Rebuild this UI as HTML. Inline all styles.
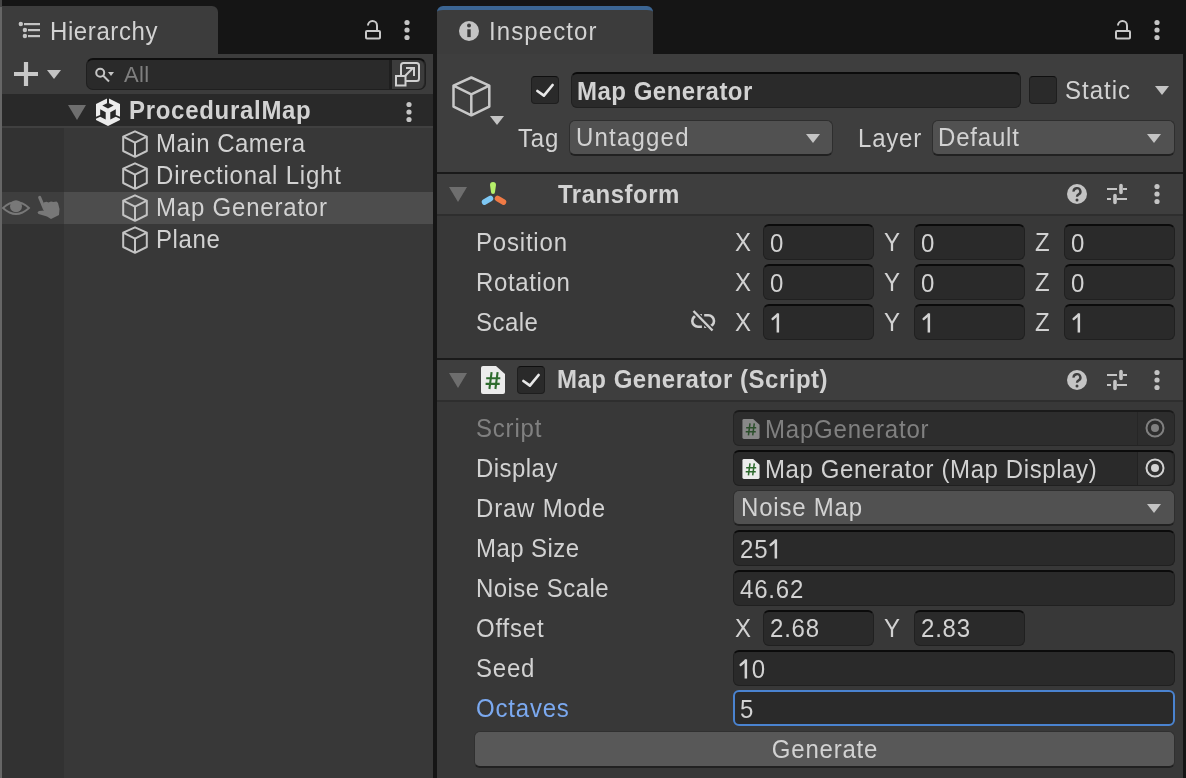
<!DOCTYPE html>
<html><head><meta charset="utf-8">
<style>
*{margin:0;padding:0;box-sizing:border-box}
html,body{width:1186px;height:778px;overflow:hidden;background:#151515;-webkit-font-smoothing:antialiased;font-family:"Liberation Sans",sans-serif;color:#d2d2d2}
.a{position:absolute}
.t{will-change:transform;transform:scaleY(1.05);transform-origin:0 22px;position:absolute;font-size:24px;line-height:28px;white-space:nowrap;letter-spacing:0.8px}
.b{font-weight:bold;letter-spacing:0.5px}
.fld{position:absolute;background:#2a2a2a;border:1px solid #202020;border-top:2px solid #0b0b0b;border-radius:6px;height:36px}
.dd{position:absolute;background:#515151;border:1px solid #2e2e2e;border-bottom:2px solid #212121;border-radius:6px}
.arr{position:absolute;width:0;height:0;border-left:8px solid transparent;border-right:8px solid transparent;border-top:10px solid #c4c4c4}
.fold{position:absolute;width:0;height:0;border-left:9px solid transparent;border-right:9px solid transparent;border-top:15px solid #6e6e6e}
.sep{position:absolute;background:#1a1a1a}
.one{position:relative;color:transparent}
</style></head><body>
<!-- left edge strip -->
<div class="a" style="left:0;top:0;width:2px;height:7px;background:#474747"></div>
<div class="a" style="left:0;top:7px;width:2px;height:771px;background:#666666"></div>

<!-- ============ HIERARCHY ============ -->
<div class="a" style="left:2px;top:6px;width:216px;height:60px;background:#3c3c3c;border-radius:0 6px 0 0"></div>
<div class="a" style="left:2px;top:54px;width:431px;height:40px;background:#3c3c3c"></div>
<div class="a" style="left:2px;top:94px;width:431px;height:684px;background:#383838"></div>
<div class="a" style="left:2px;top:128px;width:62px;height:650px;background:#323232"></div>
<div class="a" style="left:2px;top:94px;width:431px;height:32px;background:#292929"></div>
<div class="a" style="left:2px;top:126px;width:431px;height:2px;background:#404040"></div>
<!-- selected row -->
<div class="a" style="left:64px;top:192px;width:369px;height:32px;background:#4d4d4d"></div>
<div class="a" style="left:2px;top:192px;width:62px;height:32px;background:#3e3e3e"></div>


<svg class="a" style="left:0px;top:192px" width="64" height="32" viewBox="0 0 64 32"><path d="M3 16 Q16 4 29 16 Q16 28 3 16 Z" fill="none" stroke="#787878" stroke-width="1.8"/><circle cx="16" cy="14.3" r="6" fill="#787878"/><path d="M3 16 Q16 4 29 16" fill="none" stroke="#3e3e3e" stroke-width="0" /><path d="M39.7 5.5 L44.5 17" stroke="#787878" stroke-width="3.2" stroke-linecap="round"/><path d="M43.5 10.5 L46.5 9.8 L48.5 10.6 L51 9.5 L53.5 10 L56.5 9.5 L58 11 L59.5 17 L59 23 L51 27 L47 24.5 L38.5 22 L37.5 20.3 L39 19 L44 18.5 Z" fill="#787878"/></svg>
<!-- hierarchy tab content -->
<svg class="a" style="left:16px;top:20px" width="28" height="20" viewBox="0 0 28 20">
<circle cx="4.8" cy="4" r="2.2" fill="#c4c4c4"/><rect x="8" y="3" width="16" height="2.2" fill="#c4c4c4"/>
<circle cx="8.9" cy="10" r="2.2" fill="#c4c4c4"/><rect x="12" y="9" width="12" height="2.2" fill="#c4c4c4"/>
<circle cx="8.9" cy="16" r="2.2" fill="#c4c4c4"/><rect x="12" y="15" width="12" height="2.2" fill="#c4c4c4"/>
</svg>
<div class="t" style="left:50px;top:18px;letter-spacing:0.6px">Hierarchy</div>
<svg class="a" style="left:360px;top:16px" width="26" height="28" viewBox="0 0 26 28"><rect x="6" y="15" width="14" height="7.6" rx="1" fill="none" stroke="#c8c8c8" stroke-width="2"/><path d="M8 9.6 A4.5 4.5 0 0 1 17 9.5 L17 15" fill="none" stroke="#c8c8c8" stroke-width="2"/></svg>
<svg class="a" style="left:401px;top:17px" width="12" height="26" viewBox="0 0 12 26"><circle cx="6" cy="5.5" r="2.6" fill="#c4c4c4"/><circle cx="6" cy="13" r="2.6" fill="#c4c4c4"/><circle cx="6" cy="20.5" r="2.6" fill="#c4c4c4"/></svg>
<!-- toolbar -->
<svg class="a" style="left:14px;top:62px" width="24" height="24" viewBox="0 0 24 24"><path d="M12 0 V24 M0 12 H24" stroke="#c8c8c8" stroke-width="4.2"/></svg>
<div class="arr" style="left:47px;top:70px;border-left-width:7px;border-right-width:7px;border-top-width:9px"></div>
<div class="a" style="left:86px;top:58px;width:340px;height:32px;background:#2a2a2a;border:1px solid #1f1f1f;border-top:2px solid #0f0f0f;border-radius:7px"></div>
<svg class="a" style="left:94px;top:66px" width="22" height="18" viewBox="0 0 22 18"><circle cx="6.2" cy="6.7" r="4" fill="none" stroke="#c4c4c4" stroke-width="2"/><path d="M9 9.5 L15 15.5" stroke="#c4c4c4" stroke-width="2"/><path d="M14 6 L20 6 L17 10 Z" fill="#c4c4c4"/></svg>
<div class="t" style="left:124px;top:60.5px;font-size:22px;color:#7f7f7f;letter-spacing:0.3px;transform:none">All</div>
<div class="a" style="left:388.5px;top:60px;width:3px;height:29px;background:#1f1f1f"></div><div class="a" style="left:391.5px;top:60px;width:32.5px;height:28.5px;background:#3c3c3c;border-radius:0 6px 6px 0"></div><svg class="a" style="left:394px;top:60px" width="30" height="28" viewBox="0 0 30 28"><rect x="7" y="3" width="18" height="18" rx="2.5" fill="none" stroke="#d0d0d0" stroke-width="2"/><rect x="2" y="16" width="9.5" height="9.5" fill="#3c3c3c" stroke="#d0d0d0" stroke-width="2"/><path d="M11 16 L19 8" stroke="#d0d0d0" stroke-width="2"/><path d="M12 8 H20 V16" fill="none" stroke="#d0d0d0" stroke-width="2"/></svg>
<!-- rows -->
<div class="fold" style="left:68px;top:105px"></div>
<svg class="a" style="left:96px;top:98px" width="24" height="28" viewBox="0 0 24 28">
<path d="M12 0 L24 6.1 L24 21.9 L12 28 L0 21.9 L0 6.1 Z" fill="#ececec"/>
<path d="M6.3 7.4 L12 4.8 L17.7 7.4 L12 10.5 Z" fill="#282828"/>
<rect x="11" y="0" width="2" height="5.5" fill="#282828"/>
<path d="M4.2 11.2 L9.7 14.2 L9.7 21.6 L4.2 18.8 L0 20.7 L0 18.8 L4.2 16.9 Z" fill="#282828"/>
<path d="M19.8 11.2 L14.3 14.2 L14.3 21.6 L19.8 18.8 L24 20.7 L24 18.8 L19.8 16.9 Z" fill="#282828"/>
</svg>
<div class="t b" style="left:129px;top:97px;letter-spacing:0.7px">ProceduralMap</div>
<svg class="a" style="left:403px;top:99px" width="12" height="26" viewBox="0 0 12 26"><circle cx="6" cy="5.5" r="2.6" fill="#c4c4c4"/><circle cx="6" cy="13" r="2.6" fill="#c4c4c4"/><circle cx="6" cy="20.5" r="2.6" fill="#c4c4c4"/></svg>
<svg class="a" style="left:122px;top:130px" width="26" height="28" viewBox="0 0 26 28"><path d="M13 1.3 L24.8 6.6 L24.8 21 L13 26.8 L1.2 21 L1.2 6.6 Z M1.2 6.6 L13 12.7 L24.8 6.6 M13 12.7 L13 26.8" fill="none" stroke="#c4c4c4" stroke-width="2" stroke-linejoin="round"/></svg><div class="t" style="left:156px;top:129.5px;letter-spacing:0.5px">Main Camera</div>
<svg class="a" style="left:122px;top:162px" width="26" height="28" viewBox="0 0 26 28"><path d="M13 1.3 L24.8 6.6 L24.8 21 L13 26.8 L1.2 21 L1.2 6.6 Z M1.2 6.6 L13 12.7 L24.8 6.6 M13 12.7 L13 26.8" fill="none" stroke="#c4c4c4" stroke-width="2" stroke-linejoin="round"/></svg><div class="t" style="left:156px;top:161.5px">Directional Light</div>
<svg class="a" style="left:122px;top:194px" width="26" height="28" viewBox="0 0 26 28"><path d="M13 1.3 L24.8 6.6 L24.8 21 L13 26.8 L1.2 21 L1.2 6.6 Z M1.2 6.6 L13 12.7 L24.8 6.6 M13 12.7 L13 26.8" fill="none" stroke="#c4c4c4" stroke-width="2" stroke-linejoin="round"/></svg><div class="t" style="left:156px;top:193.5px">Map Generator</div>
<svg class="a" style="left:122px;top:226px" width="26" height="28" viewBox="0 0 26 28"><path d="M13 1.3 L24.8 6.6 L24.8 21 L13 26.8 L1.2 21 L1.2 6.6 Z M1.2 6.6 L13 12.7 L24.8 6.6 M13 12.7 L13 26.8" fill="none" stroke="#c4c4c4" stroke-width="2" stroke-linejoin="round"/></svg><div class="t" style="left:156px;top:225.5px;letter-spacing:0.6px">Plane</div>

<!-- ============ INSPECTOR ============ -->
<div class="a" style="left:437px;top:6px;width:216px;height:60px;background:#3c3c3c;border-radius:6px 6px 0 0;border-top:4px solid #3b6593"></div>
<div class="a" style="left:437px;top:54px;width:746px;height:724px;background:#383838"></div>
<div class="a" style="left:437px;top:54px;width:746px;height:118px;background:#3e3e3e"></div>
<div class="sep" style="left:437px;top:172px;width:746px;height:2px"></div>
<div class="a" style="left:437px;top:174px;width:746px;height:40px;background:#3e3e3e"></div>
<div class="a" style="left:437px;top:214px;width:746px;height:2px;background:#2e2e2e"></div>
<div class="sep" style="left:437px;top:358px;width:746px;height:2px"></div>
<div class="a" style="left:437px;top:360px;width:746px;height:40px;background:#3e3e3e"></div>
<div class="a" style="left:437px;top:400px;width:746px;height:2px;background:#2e2e2e"></div>
<svg class="a" style="left:459px;top:21px" width="20" height="20" viewBox="0 0 20 20"><circle cx="10" cy="10" r="10" fill="#c4c4c4"/><circle cx="10" cy="4.4" r="2" fill="#3c3c3c"/><rect x="8.3" y="8.3" width="3.4" height="7.8" fill="#3c3c3c"/></svg>
<div class="t" style="left:489px;top:18px;letter-spacing:1.1px">Inspector</div>
<svg class="a" style="left:1110px;top:16px" width="26" height="28" viewBox="0 0 26 28"><rect x="6" y="15" width="14" height="7.6" rx="1" fill="none" stroke="#c8c8c8" stroke-width="2"/><path d="M8 9.6 A4.5 4.5 0 0 1 17 9.5 L17 15" fill="none" stroke="#c8c8c8" stroke-width="2"/></svg>
<svg class="a" style="left:1151px;top:17px" width="12" height="26" viewBox="0 0 12 26"><circle cx="6" cy="5.5" r="2.6" fill="#c4c4c4"/><circle cx="6" cy="13" r="2.6" fill="#c4c4c4"/><circle cx="6" cy="20.5" r="2.6" fill="#c4c4c4"/></svg>
<svg class="a" style="left:450px;top:73px" width="44" height="46" viewBox="0 0 44 46"><path d="M21.3 4.5 L39.3 12.6 L39.3 33.6 L21.3 42.3 L3.5 33.6 L3.5 12.6 Z M3.5 12.6 L21.3 21.4 L39.3 12.6 M21.3 21.4 L21.3 42.3" fill="none" stroke="#c8c8c8" stroke-width="2.5" stroke-linejoin="round"/></svg>
<div class="arr" style="left:490px;top:116px;border-left-width:7px;border-right-width:7px;border-top-width:9px"></div>
<div class="a" style="left:531px;top:76px;width:28px;height:28px;background:#2a2a2a;border:1px solid #1e1e1e;border-top-color:#0f0f0f;border-radius:4px"></div><svg class="a" style="left:531px;top:76px" width="28" height="28" viewBox="0 0 28 28"><path d="M6.4 15 L12.9 19.6 L21.6 9" fill="none" stroke="#e8e8e8" stroke-width="2.7" stroke-linecap="round" stroke-linejoin="round"/></svg>
<div class="fld" style="left:571px;top:72px;width:450px;height:36px;border-radius:6px"></div>
<div class="t b" style="left:577px;top:78px;">Map Generator</div>
<div class="a" style="left:1029px;top:76px;width:28px;height:28px;background:#2a2a2a;border:1px solid #1e1e1e;border-top-color:#0f0f0f;border-radius:4px"></div>
<div class="t" style="left:1065px;top:76.5px;letter-spacing:1.0px">Static</div>
<div class="arr" style="left:1155px;top:86px;border-left-width:7.5px;border-right-width:7.5px;border-top-width:9px"></div>
<div class="t" style="left:517.5px;top:124.80000000000001px;">Tag</div>
<div class="dd" style="left:569px;top:120px;width:264px;height:36px"></div>
<div class="t" style="left:575.5px;top:123.8px;letter-spacing:1.2px">Untagged</div>
<div class="arr" style="left:806px;top:133.5px;border-left-width:7.5px;border-right-width:7.5px;border-top-width:9.5px"></div>
<div class="t" style="left:858px;top:124.80000000000001px;">Layer</div>
<div class="dd" style="left:932px;top:120px;width:243px;height:36px"></div>
<div class="t" style="left:938px;top:123.8px;">Default</div>
<div class="arr" style="left:1147px;top:133.5px;border-left-width:7.5px;border-right-width:7.5px;border-top-width:9.5px"></div>
<div class="fold" style="left:449px;top:187px"></div>
<svg class="a" style="left:478px;top:178px" width="32" height="30" viewBox="0 0 32 30"><path d="M12 7 A3 3 0 0 1 18 7 L17 14 A2 2 0 0 1 13 14 Z" fill="#b6f06a"/><path d="M6.5 24 L12.5 20.5" stroke="#7ec8f4" stroke-width="5.5" stroke-linecap="round"/><path d="M19.5 20.5 L25.5 24" stroke="#f07a45" stroke-width="5.5" stroke-linecap="round"/></svg>
<div class="t b" style="left:557.5px;top:180.5px;">Transform</div>
<svg class="a" style="left:1066px;top:183px" width="22" height="22" viewBox="0 0 22 22"><circle cx="11" cy="11" r="10" fill="#c4c4c4"/><path d="M7.6 8.6 A3.4 3.3 0 1 1 12.6 11.4 C11.5 12 11 12.6 11 13.8" fill="none" stroke="#3e3e3e" stroke-width="2.4"/><circle cx="11" cy="17" r="1.5" fill="#3e3e3e"/></svg><svg class="a" style="left:1106px;top:183px" width="22" height="22" viewBox="0 0 22 22"><path d="M1 6 H11 M17 6 H21 M1 16 H5 M11 16 H21" stroke="#c4c4c4" stroke-width="2.2"/><path d="M15 2.6 V9.4 M9 12.6 V19.4" stroke="#c4c4c4" stroke-width="3.6" stroke-linecap="round"/></svg><svg class="a" style="left:1151px;top:181px" width="12" height="26" viewBox="0 0 12 26"><circle cx="6" cy="5.5" r="2.6" fill="#c4c4c4"/><circle cx="6" cy="13" r="2.6" fill="#c4c4c4"/><circle cx="6" cy="20.5" r="2.6" fill="#c4c4c4"/></svg>
<div class="t" style="left:475.5px;top:229.0px;">Position</div>
<div class="t" style="left:734.5px;top:229.0px;">X</div>
<div class="fld" style="left:763px;top:224px;width:111px;height:36px;"></div>
<div class="t" style="left:883.5px;top:229.0px;">Y</div>
<div class="fld" style="left:914px;top:224px;width:111px;height:36px;"></div>
<div class="t" style="left:1034.5px;top:229.0px;">Z</div>
<div class="fld" style="left:1064px;top:224px;width:111px;height:36px;"></div>
<div class="t" style="left:769.5px;top:229.5px;">0</div>
<div class="t" style="left:920.5px;top:229.5px;">0</div>
<div class="t" style="left:1070.5px;top:229.5px;">0</div>
<div class="t" style="left:475.5px;top:269.0px;letter-spacing:0.62px">Rotation</div>
<div class="t" style="left:734.5px;top:269.0px;">X</div>
<div class="fld" style="left:763px;top:264px;width:111px;height:36px;"></div>
<div class="t" style="left:883.5px;top:269.0px;">Y</div>
<div class="fld" style="left:914px;top:264px;width:111px;height:36px;"></div>
<div class="t" style="left:1034.5px;top:269.0px;">Z</div>
<div class="fld" style="left:1064px;top:264px;width:111px;height:36px;"></div>
<div class="t" style="left:769.5px;top:269.5px;">0</div>
<div class="t" style="left:920.5px;top:269.5px;">0</div>
<div class="t" style="left:1070.5px;top:269.5px;">0</div>
<div class="t" style="left:475.5px;top:309.0px;letter-spacing:0.45px">Scale</div>
<div class="t" style="left:734.5px;top:309.0px;">X</div>
<div class="fld" style="left:763px;top:304px;width:111px;height:36px;"></div>
<div class="t" style="left:883.5px;top:309.0px;">Y</div>
<div class="fld" style="left:914px;top:304px;width:111px;height:36px;"></div>
<div class="t" style="left:1034.5px;top:309.0px;">Z</div>
<div class="fld" style="left:1064px;top:304px;width:111px;height:36px;"></div>
<div class="t" style="left:769.5px;top:309.5px;"><span class="one">1<svg class="a" style="left:0;top:0" width="14" height="24" viewBox="0 0 14 24"><rect x="6.6" y="4.4" width="2.5" height="18.1" fill="#d2d2d2"/><path d="M2.6 9.6 L7.8 5.3" stroke="#d2d2d2" stroke-width="2.3" stroke-linecap="round"/></svg></span></div>
<div class="t" style="left:920.5px;top:309.5px;"><span class="one">1<svg class="a" style="left:0;top:0" width="14" height="24" viewBox="0 0 14 24"><rect x="6.6" y="4.4" width="2.5" height="18.1" fill="#d2d2d2"/><path d="M2.6 9.6 L7.8 5.3" stroke="#d2d2d2" stroke-width="2.3" stroke-linecap="round"/></svg></span></div>
<div class="t" style="left:1070.5px;top:309.5px;"><span class="one">1<svg class="a" style="left:0;top:0" width="14" height="24" viewBox="0 0 14 24"><rect x="6.6" y="4.4" width="2.5" height="18.1" fill="#d2d2d2"/><path d="M2.6 9.6 L7.8 5.3" stroke="#d2d2d2" stroke-width="2.3" stroke-linecap="round"/></svg></span></div>
<svg class="a" style="left:684px;top:304px" width="40" height="34" viewBox="0 0 40 34"><path d="M17.9 11.3 H14 A5.7 5.7 0 0 0 14 22.7 H17.9 M20.2 11.3 H24.3 A5.7 5.7 0 0 1 24.3 22.7 H20.2" fill="none" stroke="#d0d0d0" stroke-width="2.6"/><path d="M9.5 7 L28.5 26.5" stroke="#383838" stroke-width="5"/><path d="M9.5 7 L28.5 26.5" stroke="#d0d0d0" stroke-width="2.4"/></svg>
<div class="fold" style="left:449px;top:373px"></div>
<svg class="a" style="left:481px;top:366px" width="24" height="28" viewBox="0 0 24 28"><path d="M2 0 H15 L24 8 V26 A2 2 0 0 1 22 28 H2 A2 2 0 0 1 0 26 V2 A2 2 0 0 1 2 0 Z" fill="#ececec"/><path d="M10.6 6.2 L8.4 23 M16.6 6.2 L14.4 23 M5.2 12.3 H19.3 M4.6 17.9 H18.7" stroke="#2e6b2e" stroke-width="2.1"/></svg>
<div class="a" style="left:517px;top:366px;width:28px;height:28px;background:#2a2a2a;border:1px solid #1e1e1e;border-top-color:#0f0f0f;border-radius:4px"></div><svg class="a" style="left:517px;top:366px" width="28" height="28" viewBox="0 0 28 28"><path d="M6.4 15 L12.9 19.6 L21.6 9" fill="none" stroke="#e8e8e8" stroke-width="2.7" stroke-linecap="round" stroke-linejoin="round"/></svg>
<div class="t b" style="left:557px;top:366.3px;">Map Generator (Script)</div>
<svg class="a" style="left:1066px;top:369px" width="22" height="22" viewBox="0 0 22 22"><circle cx="11" cy="11" r="10" fill="#c4c4c4"/><path d="M7.6 8.6 A3.4 3.3 0 1 1 12.6 11.4 C11.5 12 11 12.6 11 13.8" fill="none" stroke="#3e3e3e" stroke-width="2.4"/><circle cx="11" cy="17" r="1.5" fill="#3e3e3e"/></svg><svg class="a" style="left:1106px;top:369px" width="22" height="22" viewBox="0 0 22 22"><path d="M1 6 H11 M17 6 H21 M1 16 H5 M11 16 H21" stroke="#c4c4c4" stroke-width="2.2"/><path d="M15 2.6 V9.4 M9 12.6 V19.4" stroke="#c4c4c4" stroke-width="3.6" stroke-linecap="round"/></svg><svg class="a" style="left:1151px;top:367px" width="12" height="26" viewBox="0 0 12 26"><circle cx="6" cy="5.5" r="2.6" fill="#c4c4c4"/><circle cx="6" cy="13" r="2.6" fill="#c4c4c4"/><circle cx="6" cy="20.5" r="2.6" fill="#c4c4c4"/></svg>
<div class="t" style="left:475.5px;top:415.0px;color:#808080">Script</div>
<div class="t" style="left:475.5px;top:455.0px;color:#d2d2d2;letter-spacing:0.45px">Display</div>
<div class="t" style="left:475.5px;top:495.0px;color:#d2d2d2">Draw Mode</div>
<div class="t" style="left:475.5px;top:535.0px;color:#d2d2d2;letter-spacing:0.42px">Map Size</div>
<div class="t" style="left:475.5px;top:575.0px;color:#d2d2d2;letter-spacing:0.45px">Noise Scale</div>
<div class="t" style="left:475.5px;top:615.0px;color:#d2d2d2">Offset</div>
<div class="t" style="left:475.5px;top:655.0px;color:#d2d2d2">Seed</div>
<div class="t" style="left:475.5px;top:695.0px;color:#7ba9f0">Octaves</div>
<div class="fld" style="left:733px;top:410px;width:442px;height:36px;background:#2d2d2d;border-color:#242424;border-top-color:#1a1a1a"></div>
<div class="a" style="left:1137px;top:411.5px;width:36px;height:33px;background:#2d2d2d;border-left:1px solid #262626;border-radius:0 6px 6px 0"></div>
<svg class="a" style="left:742px;top:419px" width="18" height="20" viewBox="0 0 24 28"><path d="M2 0 H15 L24 8 V26 A2 2 0 0 1 22 28 H2 A2 2 0 0 1 0 26 V2 A2 2 0 0 1 2 0 Z" fill="#888888"/><path d="M10.6 6.2 L8.4 23 M16.6 6.2 L14.4 23 M5.2 12.3 H19.3 M4.6 17.9 H18.7" stroke="#2b4f2b" stroke-width="2.1"/></svg>
<div class="t" style="left:765px;top:415.8px;color:#808080">MapGenerator</div>
<svg class="a" style="left:1144px;top:417px" width="22" height="22" viewBox="0 0 22 22"><circle cx="11" cy="11" r="8.5" fill="none" stroke="#808080" stroke-width="2"/><circle cx="11" cy="11" r="4" fill="#808080"/></svg>
<div class="fld" style="left:733px;top:450px;width:442px;height:36px;"></div>
<div class="a" style="left:1137px;top:451.5px;width:36px;height:33px;background:#2f2f2f;border-left:1px solid #222;border-radius:0 6px 6px 0"></div>
<svg class="a" style="left:742px;top:459px" width="18" height="20" viewBox="0 0 24 28"><path d="M2 0 H15 L24 8 V26 A2 2 0 0 1 22 28 H2 A2 2 0 0 1 0 26 V2 A2 2 0 0 1 2 0 Z" fill="#ececec"/><path d="M10.6 6.2 L8.4 23 M16.6 6.2 L14.4 23 M5.2 12.3 H19.3 M4.6 17.9 H18.7" stroke="#2e6b2e" stroke-width="2.1"/></svg>
<div class="t" style="left:765px;top:455.8px;letter-spacing:0.6px">Map Generator (Map Display)</div>
<svg class="a" style="left:1144px;top:457px" width="22" height="22" viewBox="0 0 22 22"><circle cx="11" cy="11" r="8.5" fill="none" stroke="#d2d2d2" stroke-width="2"/><circle cx="11" cy="11" r="4" fill="#d2d2d2"/></svg>
<div class="dd" style="left:733px;top:490px;width:442px;height:36px"></div>
<div class="t" style="left:740.5px;top:494px;">Noise Map</div>
<div class="arr" style="left:1147px;top:503.5px;border-left-width:7.5px;border-right-width:7.5px;border-top-width:9.5px"></div>
<div class="fld" style="left:733px;top:530px;width:442px;height:36px;"></div>
<div class="t" style="left:739.5px;top:535.8px;">25<span class="one">1<svg class="a" style="left:0;top:0" width="14" height="24" viewBox="0 0 14 24"><rect x="6.6" y="4.4" width="2.5" height="18.1" fill="#d2d2d2"/><path d="M2.6 9.6 L7.8 5.3" stroke="#d2d2d2" stroke-width="2.3" stroke-linecap="round"/></svg></span></div>
<div class="fld" style="left:733px;top:570px;width:442px;height:36px;"></div>
<div class="t" style="left:739.5px;top:575.8px;">46.62</div>
<div class="t" style="left:734.5px;top:614.8px;">X</div>
<div class="fld" style="left:763px;top:610px;width:111px;height:36px;"></div>
<div class="t" style="left:769.5px;top:615.3px;">2.68</div>
<div class="t" style="left:883.5px;top:614.8px;">Y</div>
<div class="fld" style="left:914px;top:610px;width:111px;height:36px;"></div>
<div class="t" style="left:920.5px;top:615.3px;">2.83</div>
<div class="fld" style="left:733px;top:650px;width:442px;height:36px;"></div>
<div class="t" style="left:737.5px;top:655.8px;letter-spacing:0.4px"><span class="one">1<svg class="a" style="left:0;top:0" width="14" height="24" viewBox="0 0 14 24"><rect x="6.6" y="4.4" width="2.5" height="18.1" fill="#d2d2d2"/><path d="M2.6 9.6 L7.8 5.3" stroke="#d2d2d2" stroke-width="2.3" stroke-linecap="round"/></svg></span>0</div>
<div class="fld" style="left:733px;top:690px;width:442px;height:36px;border:2px solid #4a83d0"></div>
<div class="t" style="left:739.5px;top:695.8px;">5</div>
<div class="a" style="left:474px;top:731px;width:701px;height:36.5px;background:#585858;border:1px solid #303030;border-bottom:2px solid #212121;border-radius:6px"></div>
<div class="t" style="left:474.5px;top:736px;width:700px;text-align:center">Generate</div>
<div class="a" style="left:1183px;top:54px;width:3px;height:724px;background:#151515"></div>
</body></html>
